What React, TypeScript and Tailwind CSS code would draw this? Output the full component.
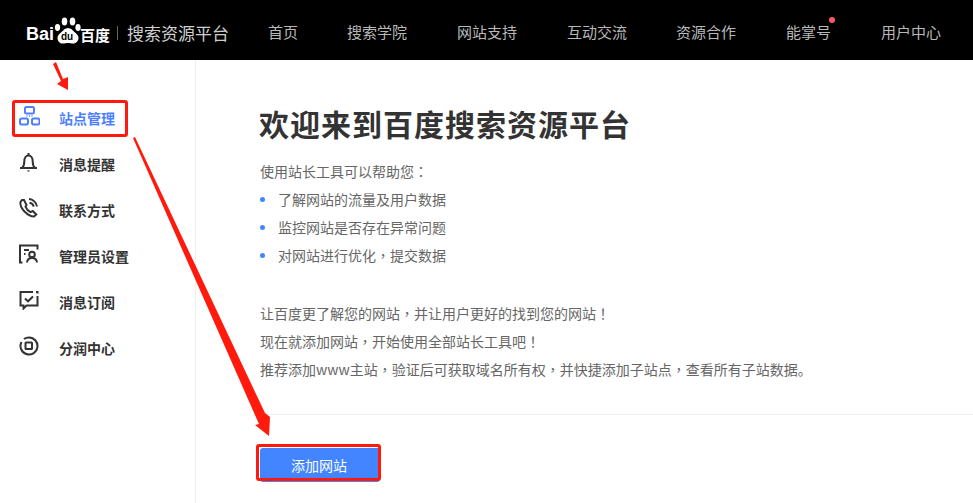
import React from "react";

const nav: [string, string][] = [
  ["首页", "mr-[49px]"],
  ["搜索学院", "mr-[50px]"],
  ["网站支持", "mr-[50px]"],
  ["互动交流", "mr-[49px]"],
  ["资源合作", "mr-[50px]"],
  ["能掌号", "mr-[50px]"],
  ["用户中心", ""],
];

const S = { fill: "none", stroke: "currentColor", strokeWidth: 2 };

const icons: Record<string, React.ReactNode> = {
  site: (
    <svg width="21" height="20" viewBox="0 0 21 20" {...S}>
      <rect x="6" y="1" width="9" height="6.500" rx="1.500" />
      <path d="M7.500 10h1M10 10h1M12.500 10h1" strokeWidth="1.600" />
      <rect x="1" y="12.500" width="8" height="6" rx="1.800" />
      <rect x="13" y="12.500" width="7.500" height="6" rx="1.800" />
    </svg>
  ),
  bell: (
    <svg width="20" height="20" viewBox="0 0 20 20" {...S}>
      <path d="M1 16h17M3 16c1.800-1.500 2.300-3 2.300-6.500 0-3.500 1.800-6 4.200-6s4.200 2.500 4.200 6c0 3.500.5 5 2.300 6.500" />
      <path d="M9.500 1v2M9.500 18.200v1.300" />
    </svg>
  ),
  phone: (
    <svg width="20" height="20" viewBox="0 0 20 20" {...S}>
      <path d="M3 2 1.500 4c-.5 3 1 6.500 4 9.500s6 5 9.500 5l2.300-2-3.500-3.500-2.300 1.200c-2-1-4-3-5-5.500L7.500 7 5 2z" />
      <path d="M10 1c4 .3 7.500 3.500 8 7.500M10.500 4.700c2.500.4 3.800 1.700 4.200 4" />
    </svg>
  ),
  admin: (
    <svg width="20" height="20" viewBox="0 0 20 20" {...S}>
      <path d="M3.500 18.500H1V1.500h17.500v4" />
      <path d="M5 6h5M5 10h1.500" />
      <circle cx="13" cy="10.500" r="2.800" />
      <path d="M8 18.500c.3-3 2.200-4.500 5-4.500s4.700 1.500 5 4.500" />
    </svg>
  ),
  sub: (
    <svg width="20" height="20" viewBox="0 0 20 20" {...S}>
      <path d="M14 2H1.500v13.500h3V18.500l3-3h11V6" />
      <path d="m6 8.500 3 2.800 5-4.800" />
      <path d="M17 2h1.500v1.500" />
    </svg>
  ),
  share: (
    <svg width="20" height="20" viewBox="0 0 20 20" {...S}>
      <path d="M5 3c1.400-1 3.200-1.500 5-1.500a8.500 8.500 0 1 1-7.500 4.500" />
      <rect x="6.500" y="6.500" width="6.500" height="6.500" rx=".5" />
    </svg>
  ),
};

const menu = [
  ["site", "站点管理"],
  ["bell", "消息提醒"],
  ["phone", "联系方式"],
  ["admin", "管理员设置"],
  ["sub", "消息订阅"],
  ["share", "分润中心"],
];

function P({ c }: { c: string }) {
  return <span className="font-['Noto_Sans_CJK_TC',sans-serif]">{c}</span>;
}

function Paw() {
  return (
    <svg width="28" height="27" viewBox="0 0 28 27" fill="#fff">
      <ellipse cx="4.500" cy="10.500" rx="2.600" ry="3.400" />
      <ellipse cx="11.500" cy="4.500" rx="2.800" ry="4" />
      <ellipse cx="19.500" cy="4.500" rx="2.800" ry="4" />
      <ellipse cx="25" cy="10.500" rx="2.600" ry="3.400" />
      <path d="M15 11c3 0 4.500 2.300 6.500 4 2.500 2.200 4 3.500 4 6 0 3.500-3 5.500-5.500 5.500-1.500 0-3.500-.6-5-.6s-3.500.6-5 .6C7 26.500 4.500 24.500 4.500 21c0-2.500 1.500-3.800 4-6 2-1.700 3.500-4 6.500-4z" />
    </svg>
  );
}

export default function App() {
  return (
    <div className="relative w-[973px] h-[503px] overflow-hidden bg-white font-['Noto_Sans_CJK_SC','Liberation_Sans',sans-serif]">
      <header className="h-[60px] bg-black flex items-center text-[#b8b8b8]">
        <div className="ml-[26px] w-[242px] flex items-center">
          <div className="w-[85px] flex items-end h-[28px] mt-[-1px] text-white font-bold leading-none">
            <span className="text-[18px] font-['Liberation_Sans',sans-serif] mb-[1px]">Bai</span>
            <div className="relative -ml-[1px] flex">
              <Paw />
              <span className="absolute left-[8px] top-[15px] text-[10px] leading-none text-black font-['Liberation_Sans',sans-serif]">du</span>
            </div>
            <span className="text-[15px] mb-[2px] -ml-[1px] whitespace-nowrap font-bold">百度</span>
          </div>
          <div className="w-px h-[14px] bg-[#666] ml-[6px] mr-[9px] mt-[6px]" />
          <span className="text-[17px] leading-none text-[#cfcfcf] mt-[5px]">搜索资源平台</span>
        </div>
        <nav className="flex items-center text-[15px] mt-[4px]">
          {nav.map(([t, m]) => (
            <span key={t} className={`relative ${m}`}>
              {t}
              {t === "能掌号" && (
                <i className="absolute -right-[4px] top-[-4px] w-[6px] h-[6px] rounded-full bg-[#ff5a64]" />
              )}
            </span>
          ))}
        </nav>
      </header>
      <div className="flex h-[443px]">
        <aside className="w-[196px] shrink-0 border-r border-[#eeeeee] pt-[35px] pl-[19px]">
          {menu.map(([ic, t], i) => (
            <div
              key={t}
              className={`h-[46px] flex items-center text-[14px] font-bold ${i === 0 ? "text-[#4e7fff]" : "text-[#333]"}`}
            >
              <span className="w-[40px] flex mb-[4px]">{icons[ic]}</span>
              {t}
            </div>
          ))}
        </aside>
        <main className="flex-1 pt-[41px]">
          <h1 className="ml-[63px] text-[30px] leading-[44px] font-bold tracking-[1px] text-[#333]">欢迎来到百度搜索资源平台</h1>
          <div className="ml-[64px] mt-[12px] text-[14px] leading-[28px] text-[#666]">
            <p>使用站长工具可以帮助您<P c="：" /></p>
            <ul>
              {[
                <>了解网站的流量及用户数据</>,
                <>监控网站是否存在异常问题</>,
                <>对网站进行优化<P c="，" />提交数据</>,
              ].map((t, i) => (
                <li key={i} className="flex items-center">
                  <i className="w-[5px] h-[5px] rounded-full bg-[#4285ff] mr-[13px]" />
                  <span>{t}</span>
                </li>
              ))}
            </ul>
            <div className="mt-[30px]">
              <p>让百度更了解您的网站<P c="，" />并让用户更好的找到您的网站<P c="！" /></p>
              <p>现在就添加网站<P c="，" />开始使用全部站长工具吧<P c="！" /></p>
              <p>推荐添加www主站<P c="，" />验证后可获取域名所有权<P c="，" />并快捷添加子站点<P c="，" />查看所有子站数据。</p>
            </div>
          </div>
          <div className="mt-[31px] ml-[64px] h-px bg-[#eeeeee]" />
          <div className="ml-[64px] mt-[33px] w-[120px] h-[34px] pr-[2px] rounded-[3px] bg-[#4285ff] flex items-center justify-center text-white text-[14px]">
            添加网站
          </div>
        </main>
      </div>
      {/* red annotation overlays */}
      <div className="absolute left-[12px] top-[100px] w-[116px] h-[37px] rounded-[3px] border-[3px] border-[#ff1a0d]" />
      <div className="absolute left-[256px] top-[444px] w-[125px] h-[37px] rounded-[3px] border-[3px] border-[#ff1a0d]" />
      <svg className="absolute left-0 top-0 pointer-events-none" width="973" height="503" fill="#ff1a0d">
        <polygon points="53,64 56,62 63,79 68,77 68,90 57,84 61,81" />
        <polygon points="133,138 135,137 265,413 270,417 269,436 255,425 259,424" />
      </svg>
    </div>
  );
}
